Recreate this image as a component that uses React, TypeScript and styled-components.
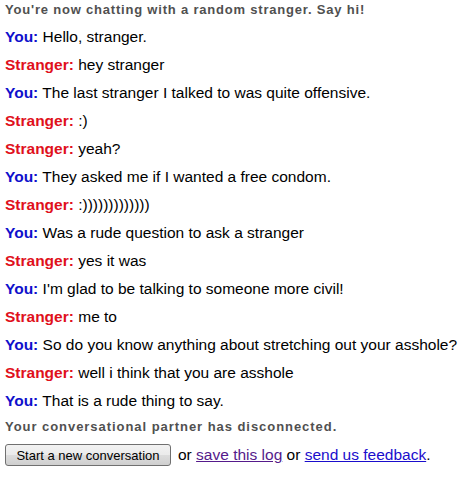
import React from "react";
import styled, { createGlobalStyle } from "styled-components";

type Message = {
  from: "you" | "stranger";
  text: string;
};

const messages: Array<Message> = [
  { from: "you", text: "Hello, stranger." },
  { from: "stranger", text: "hey stranger" },
  { from: "you", text: "The last stranger I talked to was quite offensive." },
  { from: "stranger", text: ":)" },
  { from: "stranger", text: "yeah?" },
  { from: "you", text: "They asked me if I wanted a free condom." },
  { from: "stranger", text: ":)))))))))))))" },
  { from: "you", text: "Was a rude question to ask a stranger" },
  { from: "stranger", text: "yes it was" },
  { from: "you", text: "I'm glad to be talking to someone more civil!" },
  { from: "stranger", text: "me to" },
  { from: "you", text: "So do you know anything about stretching out your asshole?" },
  { from: "stranger", text: "well i think that you are asshole" },
  { from: "you", text: "That is a rude thing to say." },
];

const GlobalStyle = createGlobalStyle`
  body {
    margin: 0;
    background: #fff;
    font-family: "Liberation Sans", Arial, sans-serif;
  }
`;

const App = () => (
  <>
    <GlobalStyle />
    <StyledLog>
      <StyledStatus>You're now chatting with a random stranger. Say hi!</StyledStatus>
      <StyledMessages>
        {messages.map((msg, index) => (
          <StyledMessage key={index}>
            <StyledSource $from={msg.from}>
              {msg.from === "you" ? "You:" : "Stranger:"}
            </StyledSource>{" "}
            {msg.text}
          </StyledMessage>
        ))}
      </StyledMessages>
      <StyledStatus $spacing={0.95}>
        Your conversational partner has disconnected.
      </StyledStatus>
      <StyledActions>
        <StyledButton type="button">Start a new conversation</StyledButton>
        <span>
          or <StyledLink href="#" $visited>save this log</StyledLink> or{" "}
          <StyledLink href="#">send us feedback</StyledLink>.
        </span>
      </StyledActions>
    </StyledLog>
  </>
);

const StyledLog = styled.div`
  padding: 0 5px;
  color: #000;
`;

const StyledStatus = styled.p<{ $spacing?: number }>`
  margin: 0;
  font-size: 13px;
  font-weight: bold;
  line-height: 20px;
  color: #505050;
  letter-spacing: ${(p) => p.$spacing ?? 0.8}px;
  white-space: nowrap;
`;

const StyledMessages = styled.div`
  margin: 3px 0 2px;
`;

const StyledMessage = styled.p`
  margin: 0;
  font-size: 15.5px;
  line-height: 28px;
  white-space: nowrap;
`;

const StyledSource = styled.strong<{ $from: "you" | "stranger" }>`
  color: ${(p) => (p.$from === "you" ? "#1010cc" : "#e0101c")};
`;

const StyledActions = styled.div`
  display: flex;
  align-items: center;
  gap: 7px;
  margin-top: 7px;
  font-size: 15.5px;
  white-space: nowrap;
`;

const StyledButton = styled.button`
  font-family: "Liberation Sans", Arial, sans-serif;
  font-size: 13px;
  width: 166px;
  height: 22px;
  padding: 0;
  border: 1px solid #707070;
  border-radius: 3px;
  background: linear-gradient(#f2f2f2, #ebebeb 50%, #dddddd 50%, #cfcfcf);
  color: #000;
`;

const StyledLink = styled.a<{ $visited?: boolean }>`
  color: ${(p) => (p.$visited ? "#551a8b" : "#1a0dcc")};
  text-decoration: underline;
`;

export default App;
